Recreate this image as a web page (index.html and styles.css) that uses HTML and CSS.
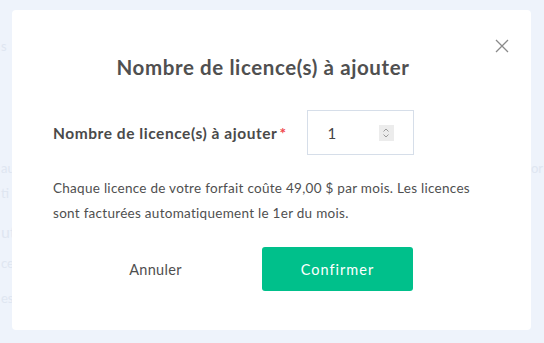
FILE: index.html
```html
<!DOCTYPE html>
<html lang="fr">
<head>
<meta charset="utf-8">
<title>Nombre de licence(s) à ajouter</title>
<link rel="stylesheet" href="styles.css">
</head>
<body>
<div class="page">
  <div class="bg">
    <div class="bg-row r1"><span>s</span></div>
    <div class="bg-row r2"><span>au</span><span>or</span></div>
    <div class="bg-row r3"><span>ti</span></div>
    <div class="bg-row r4"><span class="big">ut</span></div>
    <div class="bg-row r5"><span>ce</span></div>
    <div class="bg-row r6"><span>es</span></div>
  </div>
  <div class="overlay">
    <div class="modal" role="dialog" aria-labelledby="modal-title">
      <button class="close" type="button" aria-label="Fermer">
        <svg width="14" height="14" viewBox="0 0 14 14"><path d="M1 1L13 13M13 1L1 13" stroke="#8a8a8a" stroke-width="1.3" fill="none"/></svg>
      </button>
      <h2 class="title" id="modal-title">Nombre de licence(s) à ajouter</h2>
      <div class="field">
        <label class="label" for="qty">Nombre de licence(s) à ajouter<span class="req">*</span></label>
        <div class="input">
          <span class="value" id="qty">1</span>
          <span class="spin">
            <svg width="8" height="12" viewBox="0 0 8 12"><path d="M1.5 4.5L4 2L6.5 4.5M1.5 7.5L4 10L6.5 7.5" stroke="#9a9a9a" stroke-width="1" fill="none"/></svg>
          </span>
        </div>
      </div>
      <p class="desc">Chaque licence de votre forfait coûte 49,00 $ par mois. Les licences sont facturées automatiquement le 1er du mois.</p>
      <div class="actions">
        <button class="btn btn-cancel" type="button">Annuler</button>
        <button class="btn btn-confirm" type="button">Confirmer</button>
      </div>
    </div>
  </div>
</div>
</body>
</html>
```

FILE: styles.css
```css
* { box-sizing: border-box; }
html, body { margin: 0; padding: 0; }
body {
  font-family: Lato, "Noto Sans", sans-serif;
  background: #eef3fb;
  width: 544px;
  height: 343px;
  overflow: hidden;
}
.page { position: relative; width: 544px; height: 343px; }
.bg {
  display: flex;
  flex-direction: column;
  color: #dfe6f1;
  font-size: 13px;
  padding-top: 38px;
}
.bg-row { display: flex; justify-content: space-between; height: 20px; padding: 0 1px; }
.bg-row.r2 { margin-top: 102px; }
.bg-row.r3 { margin-top: 5px; }
.bg-row.r4 { margin-top: 17px; }
.bg-row.r4 .big { font-size: 16px; }
.bg-row.r5 { margin-top: 13px; }
.bg-row.r6 { margin-top: 15px; }

.overlay {
  position: absolute;
  inset: 0;
  padding: 10px 13px 13px 12px;
}
.modal {
  position: relative;
  background: #fff;
  border-radius: 4px;
  width: 519px;
  height: 320px;
  padding: 44px 41px 0 41px;
}
.close {
  position: absolute;
  top: 28px;
  right: 21px;
  width: 16px;
  height: 16px;
  padding: 0;
  border: 0;
  background: none;
  display: flex;
  align-items: center;
  justify-content: center;
}
.title {
  margin: 0;
  padding-right: 17px;
  text-align: center;
  font-size: 20.5px;
  font-weight: 700;
  letter-spacing: 0.6px;
  color: #505050;
  line-height: 27px;
}
.field {
  display: flex;
  align-items: center;
  margin-top: 29px;
}
.label {
  font-size: 15.5px;
  font-weight: 700;
  letter-spacing: 0.55px;
  color: #4a4a4a;
}
.req { color: #f0474f; margin-left: 2px; }
.input {
  margin-left: 20px;
  width: 107px;
  height: 45px;
  border: 1px solid #d6dee9;
  display: flex;
  align-items: center;
  padding-left: 20px;
  padding-right: 19px;
  justify-content: space-between;
}
.value { font-size: 15px; color: #444; }
.spin {
  width: 15px;
  height: 16px;
  background: #ececec;
  display: flex;
  align-items: center;
  justify-content: center;
}
.desc {
  margin: 21px 0 0 0;
  font-size: 13.5px;
  letter-spacing: 0.28px;
  line-height: 25px;
  color: #4f4f4f;
  max-width: 437px;
}
.actions {
  display: flex;
  gap: 31px;
  margin-top: 21px;
  padding-left: 27px;
}
.btn {
  width: 151px;
  height: 44px;
  border: 0;
  border-radius: 3px;
  font-family: inherit;
  font-size: 14.5px;
  cursor: pointer;
}
.btn-cancel { background: #fff; color: #4f4f4f; letter-spacing: 0.3px; }
.btn-confirm { background: #00c08b; color: #fff; letter-spacing: 1px; }
```
